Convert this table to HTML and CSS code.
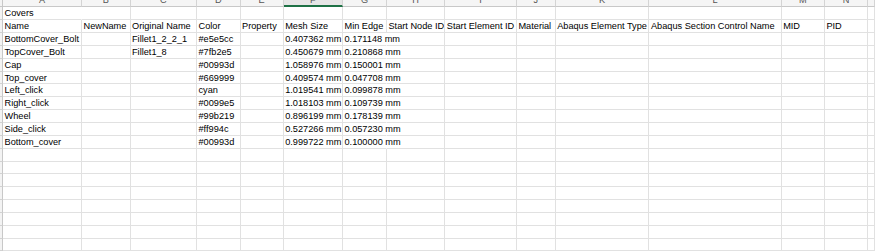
FILE: index.html
```html
<!DOCTYPE html>
<html>
<head>
<meta charset="utf-8">
<link rel="stylesheet" href="styles.css">
</head>
<body>
<div class="sheet">
  <div class="rh hd"></div>
  <div class="h"><span>A</span></div><div class="h"><span>B</span></div><div class="h"><span>C</span></div><div class="h"><span>D</span></div><div class="h"><span>E</span></div><div class="h sel"><span>F</span></div><div class="h"><span>G</span></div><div class="h"><span>H</span></div><div class="h"><span>I</span></div><div class="h"><span>J</span></div><div class="h"><span>K</span></div><div class="h"><span>L</span></div><div class="h"><span>M</span></div><div class="h"><span>N</span></div><div class="h"></div>

  <div class="rh"></div>
  <div class="c ov">Covers</div><div class="c"></div><div class="c"></div><div class="c"></div><div class="c"></div><div class="c"></div><div class="c"></div><div class="c"></div><div class="c"></div><div class="c"></div><div class="c"></div><div class="c"></div><div class="c"></div><div class="c"></div><div class="c"></div>

  <div class="rh"></div>
  <div class="c">Name</div><div class="c">NewName</div><div class="c">Original Name</div><div class="c">Color</div><div class="c">Property</div><div class="c">Mesh Size</div><div class="c">Min Edge Length</div><div class="c">Start Node ID</div><div class="c">Start Element ID</div><div class="c">Material</div><div class="c">Abaqus Element Type</div><div class="c">Abaqus Section Control Name</div><div class="c">MID</div><div class="c">PID</div><div class="c"></div>

  <div class="rh"></div>
  <div class="c">BottomCover_Bolt</div><div class="c"></div><div class="c">Fillet1_2_2_1</div><div class="c">#e5e5cc</div><div class="c"></div><div class="c">0.407362 mm</div><div class="c ov">0.171148 mm</div><div class="c"></div><div class="c"></div><div class="c"></div><div class="c"></div><div class="c"></div><div class="c"></div><div class="c"></div><div class="c"></div>

  <div class="rh"></div>
  <div class="c">TopCover_Bolt</div><div class="c"></div><div class="c">Fillet1_8</div><div class="c">#7fb2e5</div><div class="c"></div><div class="c">0.450679 mm</div><div class="c ov">0.210868 mm</div><div class="c"></div><div class="c"></div><div class="c"></div><div class="c"></div><div class="c"></div><div class="c"></div><div class="c"></div><div class="c"></div>

  <div class="rh"></div>
  <div class="c">Cap</div><div class="c"></div><div class="c"></div><div class="c">#00993d</div><div class="c"></div><div class="c">1.058976 mm</div><div class="c ov">0.150001 mm</div><div class="c"></div><div class="c"></div><div class="c"></div><div class="c"></div><div class="c"></div><div class="c"></div><div class="c"></div><div class="c"></div>

  <div class="rh"></div>
  <div class="c">Top_cover</div><div class="c"></div><div class="c"></div><div class="c">#669999</div><div class="c"></div><div class="c">0.409574 mm</div><div class="c ov">0.047708 mm</div><div class="c"></div><div class="c"></div><div class="c"></div><div class="c"></div><div class="c"></div><div class="c"></div><div class="c"></div><div class="c"></div>

  <div class="rh"></div>
  <div class="c">Left_click</div><div class="c"></div><div class="c"></div><div class="c">cyan</div><div class="c"></div><div class="c">1.019541 mm</div><div class="c ov">0.099878 mm</div><div class="c"></div><div class="c"></div><div class="c"></div><div class="c"></div><div class="c"></div><div class="c"></div><div class="c"></div><div class="c"></div>

  <div class="rh"></div>
  <div class="c">Right_click</div><div class="c"></div><div class="c"></div><div class="c">#0099e5</div><div class="c"></div><div class="c">1.018103 mm</div><div class="c ov">0.109739 mm</div><div class="c"></div><div class="c"></div><div class="c"></div><div class="c"></div><div class="c"></div><div class="c"></div><div class="c"></div><div class="c"></div>

  <div class="rh"></div>
  <div class="c">Wheel</div><div class="c"></div><div class="c"></div><div class="c">#99b219</div><div class="c"></div><div class="c">0.896199 mm</div><div class="c ov">0.178139 mm</div><div class="c"></div><div class="c"></div><div class="c"></div><div class="c"></div><div class="c"></div><div class="c"></div><div class="c"></div><div class="c"></div>

  <div class="rh"></div>
  <div class="c">Side_click</div><div class="c"></div><div class="c"></div><div class="c">#ff994c</div><div class="c"></div><div class="c">0.527266 mm</div><div class="c ov">0.057230 mm</div><div class="c"></div><div class="c"></div><div class="c"></div><div class="c"></div><div class="c"></div><div class="c"></div><div class="c"></div><div class="c"></div>

  <div class="rh"></div>
  <div class="c">Bottom_cover</div><div class="c"></div><div class="c"></div><div class="c">#00993d</div><div class="c"></div><div class="c">0.999722 mm</div><div class="c ov">0.100000 mm</div><div class="c"></div><div class="c"></div><div class="c"></div><div class="c"></div><div class="c"></div><div class="c"></div><div class="c"></div><div class="c"></div>

  <div class="rh"></div><div class="c"></div><div class="c"></div><div class="c"></div><div class="c"></div><div class="c"></div><div class="c"></div><div class="c"></div><div class="c"></div><div class="c"></div><div class="c"></div><div class="c"></div><div class="c"></div><div class="c"></div><div class="c"></div><div class="c"></div>
  <div class="rh"></div><div class="c"></div><div class="c"></div><div class="c"></div><div class="c"></div><div class="c"></div><div class="c"></div><div class="c"></div><div class="c"></div><div class="c"></div><div class="c"></div><div class="c"></div><div class="c"></div><div class="c"></div><div class="c"></div><div class="c"></div>
  <div class="rh"></div><div class="c"></div><div class="c"></div><div class="c"></div><div class="c"></div><div class="c"></div><div class="c"></div><div class="c"></div><div class="c"></div><div class="c"></div><div class="c"></div><div class="c"></div><div class="c"></div><div class="c"></div><div class="c"></div><div class="c"></div>
  <div class="rh"></div><div class="c"></div><div class="c"></div><div class="c"></div><div class="c"></div><div class="c"></div><div class="c"></div><div class="c"></div><div class="c"></div><div class="c"></div><div class="c"></div><div class="c"></div><div class="c"></div><div class="c"></div><div class="c"></div><div class="c"></div>
  <div class="rh"></div><div class="c"></div><div class="c"></div><div class="c"></div><div class="c"></div><div class="c"></div><div class="c"></div><div class="c"></div><div class="c"></div><div class="c"></div><div class="c"></div><div class="c"></div><div class="c"></div><div class="c"></div><div class="c"></div><div class="c"></div>
  <div class="rh"></div><div class="c"></div><div class="c"></div><div class="c"></div><div class="c"></div><div class="c"></div><div class="c"></div><div class="c"></div><div class="c"></div><div class="c"></div><div class="c"></div><div class="c"></div><div class="c"></div><div class="c"></div><div class="c"></div><div class="c"></div>
  <div class="rh"></div><div class="c"></div><div class="c"></div><div class="c"></div><div class="c"></div><div class="c"></div><div class="c"></div><div class="c"></div><div class="c"></div><div class="c"></div><div class="c"></div><div class="c"></div><div class="c"></div><div class="c"></div><div class="c"></div><div class="c"></div>
  <div class="rh"></div><div class="c"></div><div class="c"></div><div class="c"></div><div class="c"></div><div class="c"></div><div class="c"></div><div class="c"></div><div class="c"></div><div class="c"></div><div class="c"></div><div class="c"></div><div class="c"></div><div class="c"></div><div class="c"></div><div class="c"></div>
</div>
</body>
</html>
```
FILE: styles.css
```css
html, body {
  margin: 0;
  padding: 0;
  background: #ffffff;
  overflow: hidden;
}

.sheet {
  display: grid;
  grid-template-columns: 3px 79px 48.5px 66.5px 43.5px 43.2px 59.3px 44px 58.3px 71.7px 38.7px 93.8px 132.2px 43.3px 43.5px 1fr;
  grid-template-rows: 7.4px;
  grid-auto-rows: 12.857px;
  width: 875px;
  font-family: "Liberation Sans", Arial, sans-serif;
  font-size: 9.2px;
  color: #000000;
}

.c {
  box-sizing: border-box;
  border-right: 1px solid #e1e1e1;
  border-bottom: 1px solid #e1e1e1;
  padding: 0 1.5px;
  line-height: 12px;
  white-space: nowrap;
  overflow: hidden;
}

.c.ov {
  overflow: visible;
  border-right-color: transparent;
}

.rh {
  box-sizing: border-box;
  background: #f3f3f3;
  border-right: 1px solid #c8c8c8;
  border-bottom: 1px solid #d2d2d2;
}

.rh.hd {
  border-bottom-color: #c8c8c8;
}

.h {
  box-sizing: border-box;
  background: #f5f5f5;
  border-right: 1px solid #d4d4d4;
  border-bottom: 1px solid #c8c8c8;
  overflow: hidden;
  text-align: center;
  color: #555555;
}

.h span {
  display: block;
  line-height: 10px;
  margin-top: -4.8px;
}

.h.sel {
  background: #e6e6e6;
  border-bottom: 2px solid #1e7145;
}
```
